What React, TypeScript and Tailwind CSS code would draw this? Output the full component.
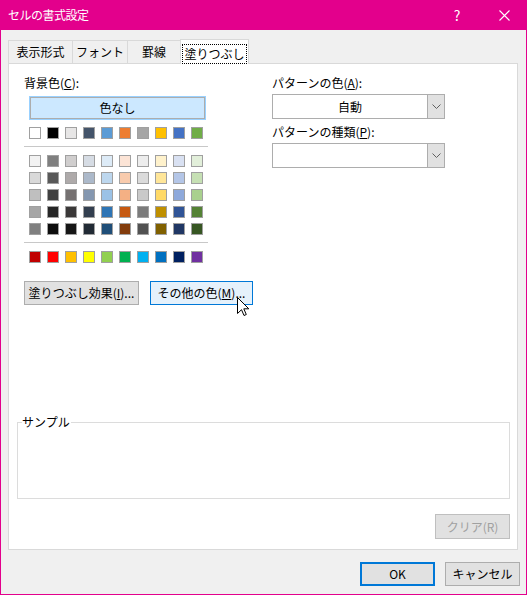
import React from "react";

const themeRows: string[][] = [
  ["#ffffff", "#000000", "#e7e6e6", "#44546a", "#5b9bd5", "#ed7d31", "#a5a5a5", "#ffc000", "#4472c4", "#70ad47"],
];

const tintRows: string[][] = [
  ["#f2f2f2", "#7f7f7f", "#d0cece", "#d6dce4", "#ddebf7", "#fce4d6", "#ededed", "#fff2cc", "#d9e1f2", "#e2efda"],
  ["#d9d9d9", "#595959", "#aeaaaa", "#acb9ca", "#bdd7ee", "#f8cbad", "#dbdbdb", "#ffe699", "#b4c6e7", "#c6e0b4"],
  ["#bfbfbf", "#404040", "#757171", "#8497b0", "#9bc2e6", "#f4b084", "#c9c9c9", "#ffd966", "#8ea9db", "#a9d08e"],
  ["#a6a6a6", "#262626", "#3a3838", "#333f4f", "#2f75b5", "#c65911", "#7b7b7b", "#bf8f00", "#305496", "#548235"],
  ["#808080", "#0d0d0d", "#161616", "#222b35", "#1f4e78", "#833c0c", "#525252", "#806000", "#203764", "#375623"],
];

const standardRow: string[] = ["#c00000", "#ff0000", "#ffc000", "#ffff00", "#92d050", "#00b050", "#00b0f0", "#0070c0", "#002060", "#7030a0"];

function SwatchRow({ colors }: { colors: string[] }) {
  return (
    <div className="flex gap-[6px] ml-[5px]">
      {colors.map((c, i) => (
        // colour comes from the palette data
        <div key={i} className="w-[12px] h-[12px] border border-[#a0a0a0]" style={{ backgroundColor: c }} />
      ))}
    </div>
  );
}

function Chevron() {
  return (
    <svg width="9" height="5" viewBox="0 0 9 5" className="block">
      <path d="M0.5 0.5 L4.5 4.5 L8.5 0.5" fill="none" stroke="#606060" strokeWidth="1" />
    </svg>
  );
}

function Dropdown({ value }: { value?: string }) {
  return (
    <div className="flex w-[173px] h-[25px] border border-[#adadad] bg-white">
      <div className="flex-1 flex items-center justify-center">{value}</div>
      <div className="w-[17px] bg-[#e1e1e1] border-l border-[#adadad] flex items-center justify-center">
        <Chevron />
      </div>
    </div>
  );
}

function Cursor() {
  return (
    <svg width="13" height="20" viewBox="0 0 13 20" className="absolute left-[86px] top-[15px]">
      <path
        d="M0.5 0.5 L0.5 16.5 L4.5 12.7 L7 18.5 L9.3 17.5 L6.8 11.8 L11.8 11.8 Z"
        fill="#ffffff"
        stroke="#000000"
        strokeWidth="1"
        strokeLinejoin="miter"
      />
    </svg>
  );
}

export default function App() {
  return (
    <div
      className="w-[527px] h-[595px] flex flex-col bg-[#f0f0f0] border border-t-0 border-[#e3008c] text-[12px] leading-4 text-black"
      style={{ fontFamily: '"Noto Sans CJK JP", "Noto Sans", sans-serif' }}
    >
      {/* title bar */}
      <div className="h-[30px] bg-[#e3008c] flex items-center text-white -mx-px">
        <div className="pl-[8px] flex-1 tracking-[-0.5px]">セルの書式設定</div>
        <div className="w-[46px] flex items-center justify-center text-[14px] mr-[1px]">?</div>
        <div className="w-[46px] h-[30px] flex items-center justify-center">
          <svg width="11" height="11" viewBox="0 0 11 11">
            <path d="M0.5 0.5 L10.5 10.5 M10.5 0.5 L0.5 10.5" stroke="#ffffff" strokeWidth="1.1" />
          </svg>
        </div>
      </div>

      {/* tabs */}
      <div className="flex items-end ml-[7px] mt-[8px] h-[25px] relative z-10">
        <div className="w-[65px] h-[23px] border border-b-0 border-[#d9d9d9] flex items-center justify-center">表示形式</div>
        <div className="w-[55px] h-[23px] border border-b-0 border-l-0 border-[#d9d9d9] flex items-center justify-center">フォント</div>
        <div className="w-[53px] h-[23px] border border-b-0 border-l-0 border-[#d9d9d9] flex items-center justify-center">罫線</div>
        <div className="shrink-0 -ml-px w-[69px] h-[25px] -mb-px bg-white border border-b-0 border-[#d9d9d9] flex items-start justify-center pt-[4px]">
          <span className="whitespace-nowrap border border-dotted border-black px-px py-[1px] leading-4">塗りつぶし</span>
        </div>
      </div>

      {/* tab panel */}
      <div className="ml-[7px] w-[510px] h-[487px] bg-white border border-[#d9d9d9] flex flex-col">
        <div className="flex pl-[15px] pt-[11px]">
          {/* background colour */}
          <div className="w-[184px] flex flex-col">
            <div>
              背景色(<span className="underline">C</span>):
            </div>
            <div className="mt-[5px] ml-[5px] w-[177px] h-[24px] border border-[#99d1ff] bg-[#cce8ff] p-0">
              <div className="w-full h-full border border-[#adadad] flex items-center justify-center">色なし</div>
            </div>
            <div className="mt-[7px]">
              {themeRows.map((r, i) => (
                <SwatchRow key={i} colors={r} />
              ))}
            </div>
            <div className="mt-[7px] h-px bg-[#c8c8c8]" />
            <div className="mt-[8px] flex flex-col gap-[5px]">
              {tintRows.map((r, i) => (
                <SwatchRow key={i} colors={r} />
              ))}
            </div>
            <div className="mt-[7px] h-px bg-[#c8c8c8]" />
            <div className="mt-[8px]">
              <SwatchRow colors={standardRow} />
            </div>
            <div className="mt-[18px] flex gap-[11px]">
              <div className="shrink-0 w-[115px] h-[24px] bg-[#e1e1e1] border border-[#adadad] flex items-center justify-center">
                塗りつぶし効果(<span className="underline">I</span>)...
              </div>
              <div className="relative shrink-0 w-[103px] h-[24px] bg-[#e5f1fb] border border-[#0078d7] flex items-center justify-center">
                その他の色(<span className="underline">M</span>)...
                <Cursor />
              </div>
            </div>
          </div>

          {/* pattern */}
          <div className="ml-[64px] flex flex-col">
            <div>
              パターンの色(<span className="underline">A</span>):
            </div>
            <div className="mt-[3px]">
              <Dropdown value="自動" />
            </div>
            <div className="mt-[5px]">
              パターンの種類(<span className="underline">P</span>):
            </div>
            <div className="mt-[3px]">
              <Dropdown />
            </div>
          </div>
        </div>

        {/* sample */}
        <div className="relative mt-[117px] ml-[8px] w-[493px] h-[77px] border border-[#dcdcdc]">
          <span className="absolute left-[4px] -top-[9px] bg-white pr-[1px]">サンプル</span>
        </div>

        <div className="mt-[15px] mr-[7px] self-end w-[75px] h-[25px] bg-[#e1e1e1] border border-[#bfbfbf] text-[#a0a0a0] flex items-center justify-center">
          クリア(R)
        </div>
      </div>

      {/* dialog buttons */}
      <div className="mt-[12px] flex justify-end gap-[10px] mr-[6px]">
        <div className="w-[75px] h-[24px] bg-[#e1e1e1] border-2 border-[#0078d7] flex items-center justify-center">OK</div>
        <div className="w-[75px] h-[24px] bg-[#e1e1e1] border border-[#adadad] flex items-center justify-center">キャンセル</div>
      </div>
    </div>
  );
}
